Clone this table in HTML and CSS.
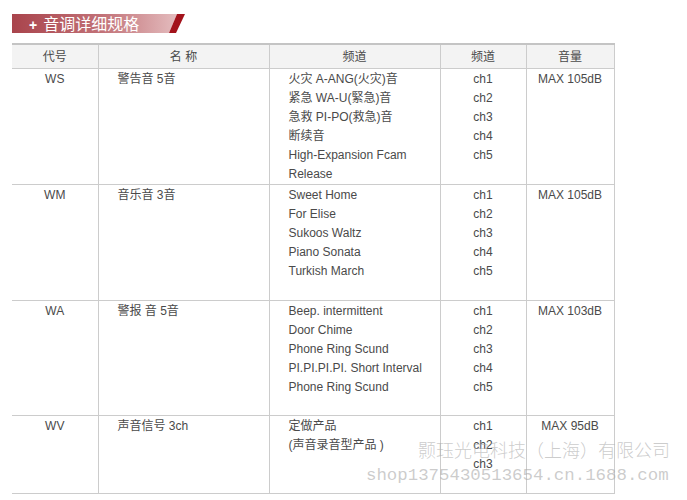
FILE: index.html
```html
<!DOCTYPE html>
<html lang="zh-CN">
<head>
<meta charset="utf-8">
<title>音调详细规格</title>
<link rel="stylesheet" href="styles.css">
</head>
<body>
<div class="page">
  <div class="banner">
    <svg class="banner-bg" width="173" height="19" viewBox="0 0 173 19" aria-hidden="true">
      <defs>
        <linearGradient id="bg" x1="0" y1="0" x2="1" y2="0">
          <stop offset="0" stop-color="#a9444c"/>
          <stop offset="0.55" stop-color="#c27278"/>
          <stop offset="1" stop-color="#e4bcbe"/>
        </linearGradient>
      </defs>
      <polygon points="0,0 165,0 157,19 0,19" fill="url(#bg)"/>
      <polygon points="165,0 173,0 164,19 157,19" fill="#a3121b"/>
    </svg>
    <h2 class="banner-title"><span class="plus">+</span>音调详细规格</h2>
  </div>

  <table class="spec">
    <colgroup>
      <col class="w-code">
      <col class="w-name">
      <col class="w-list">
      <col class="w-ch">
      <col class="w-max">
    </colgroup>
    <thead>
      <tr class="head">
        <th>代号</th>
        <th>名 称</th>
        <th>频道</th>
        <th>频道</th>
        <th>音量</th>
      </tr>
    </thead>
    <tbody>
      <tr class="r-ws">
        <td class="c-code">WS</td>
        <td class="c-name">警告音 5音</td>
        <td class="c-list">火灾 A-ANG(火灾)音<br>紧急 WA-U(緊急)音<br>急救 PI-PO(救急)音<br>断续音<br>High-Expansion Fcam<br>Release</td>
        <td class="c-ch">ch1<br>ch2<br>ch3<br>ch4<br>ch5</td>
        <td class="c-max">MAX 105dB</td>
      </tr>
      <tr class="r-wm">
        <td class="c-code">WM</td>
        <td class="c-name">音乐音 3音</td>
        <td class="c-list">Sweet Home<br>For Elise<br>Sukoos Waltz<br>Piano Sonata<br>Turkish March</td>
        <td class="c-ch">ch1<br>ch2<br>ch3<br>ch4<br>ch5</td>
        <td class="c-max">MAX 105dB</td>
      </tr>
      <tr class="r-wa">
        <td class="c-code">WA</td>
        <td class="c-name">警报 音 5音</td>
        <td class="c-list">Beep. intermittent<br>Door Chime<br>Phone Ring Scund<br>PI.PI.PI.PI. Short Interval<br>Phone Ring Scund</td>
        <td class="c-ch">ch1<br>ch2<br>ch3<br>ch4<br>ch5</td>
        <td class="c-max">MAX 103dB</td>
      </tr>
      <tr class="r-wv">
        <td class="c-code">WV</td>
        <td class="c-name">声音信号 3ch</td>
        <td class="c-list">定做产品<br>(声音录音型产品 )</td>
        <td class="c-ch">ch1<br>ch2<br>ch3</td>
        <td class="c-max">MAX 95dB</td>
      </tr>
    </tbody>
  </table>

  <div class="watermark">
    <div class="wm-name">颢珏光电科技（上海）有限公司</div>
    <div class="wm-url">shop1375430513654.cn.1688.com</div>
  </div>
</div>
</body>
</html>
```

FILE: styles.css
```css
html, body {
  margin: 0;
  padding: 0;
  background: #ffffff;
}

.page {
  position: relative;
  width: 687px;
  height: 500px;
  padding: 14px 0 0 12px;
  box-sizing: border-box;
  font-family: "Liberation Sans", "Noto Sans CJK SC", sans-serif;
  font-size: 12px;
  color: #4a4a4a;
}

/* Banner */
.banner {
  display: grid;
  width: 173px;
  height: 19px;
}

.banner-bg,
.banner-title {
  grid-area: 1 / 1;
}

.banner-bg {
  display: block;
}

.banner-title {
  margin: 0;
  padding-left: 17px;
  font-family: "Noto Sans CJK SC", sans-serif;
  font-weight: normal;
  font-size: 16px;
  line-height: 19px;
  color: #ffffff;
  white-space: nowrap;
}

.plus {
  font-family: "Liberation Sans", sans-serif;
  font-weight: bold;
  font-size: 14px;
  margin-right: 6px;
}

/* Table */
.spec {
  margin-top: 10px;
  width: 602px;
  border-collapse: collapse;
  table-layout: fixed;
  border-top: 2px solid #c4c4c4;
  border-right: 1px solid #cccccc;
  border-bottom: 1px solid #cccccc;
}

.w-code { width: 86px; }
.w-name { width: 171px; }
.w-list { width: 171px; }
.w-ch { width: 86px; }
.w-max { width: 88px; }

.spec th,
.spec td {
  border-left: 1px solid #cccccc;
  border-bottom: 1px solid #cccccc;
  line-height: 19px;
  vertical-align: top;
  font-weight: normal;
  white-space: nowrap;
}

.spec th:first-child,
.spec td:first-child {
  border-left: none;
}

.head th {
  height: 21px;
  padding: 2px 0 0;
  vertical-align: middle;
  background: #f3f3f3;
  color: #4a4a4a;
  text-align: center;
}

.spec td {
  padding: 1px 0 0;
}

.c-code { text-align: center; }
.c-name { padding-left: 19px !important; }
.c-list { padding-left: 19px !important; }
.c-ch { text-align: center; }
.c-max { text-align: center; }

.r-ws td { height: 114px; }
.r-wm td { height: 114px; }
.r-wa td { height: 113px; }
.r-wv td { height: 76px; }

/* Watermark overlay */
.watermark {
  position: absolute;
  left: 366px;
  top: 437px;
  width: 310px;
  color: rgba(170, 170, 170, 0.6);
  pointer-events: none;
}

.wm-name {
  margin-left: 52px;
  font-family: "Noto Sans CJK SC", sans-serif;
  font-weight: 300;
  font-size: 18px;
  line-height: 24px;
  white-space: nowrap;
}

.wm-url {
  margin-top: 4px;
  font-family: "Liberation Mono", monospace;
  font-size: 17.4px;
  line-height: 22px;
  white-space: nowrap;
}
```
